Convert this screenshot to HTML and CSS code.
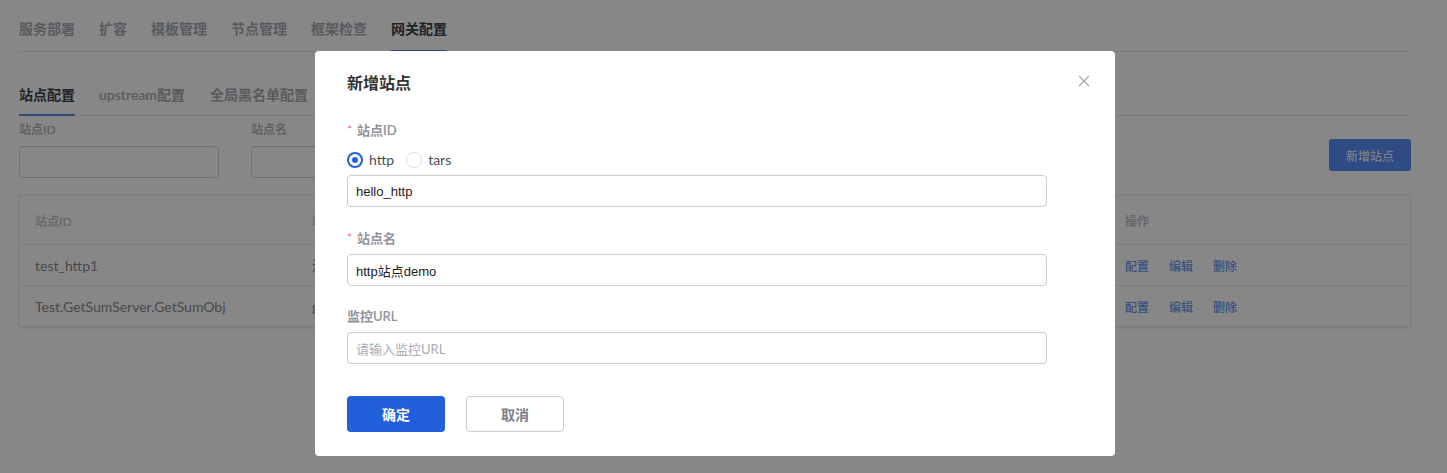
FILE: index.html
```html
<!DOCTYPE html>
<html lang="zh-CN">
<head>
<meta charset="utf-8">
<title>网关配置</title>
<link rel="stylesheet" href="styles.css">
</head>
<body>
<div class="page">
  <nav class="tabs main-tabs">
    <span class="tab">服务部署</span>
    <span class="tab">扩容</span>
    <span class="tab">模板管理</span>
    <span class="tab">节点管理</span>
    <span class="tab">框架检查</span>
    <span class="tab active">网关配置</span>
  </nav>
  <nav class="tabs sub-tabs">
    <span class="tab active">站点配置</span>
    <span class="tab">upstream配置</span>
    <span class="tab">全局黑名单配置</span>
  </nav>
  <div class="filters">
    <div class="field">
      <label class="flabel">站点ID</label>
      <div class="finput"></div>
    </div>
    <div class="field">
      <label class="flabel">站点名</label>
      <div class="finput"></div>
    </div>
    <button class="add-btn">新增站点</button>
  </div>
  <div class="table">
    <div class="row head">
      <div class="c c1">站点ID</div>
      <div class="c c2">站点名</div>
      <div class="c c3">监控URL</div>
      <div class="c c4">操作</div>
    </div>
    <div class="row">
      <div class="c c1">test_http1</div>
      <div class="c c2">测试站点</div>
      <div class="c c3"></div>
      <div class="c c4"><a class="link">配置</a><a class="link">编辑</a><a class="link">删除</a></div>
    </div>
    <div class="row">
      <div class="c c1">Test.GetSumServer.GetSumObj</div>
      <div class="c c2">getsum站点</div>
      <div class="c c3"></div>
      <div class="c c4"><a class="link">配置</a><a class="link">编辑</a><a class="link">删除</a></div>
    </div>
  </div>
</div>

<div class="mask"></div>

<div class="dialog">
  <div class="dlg-head">
    <span class="dlg-title">新增站点</span>
    <span class="dlg-close">
      <svg width="12" height="12" viewBox="0 0 12 12"><path d="M1 1L11 11M11 1L1 11" stroke="#a3a6ad" stroke-width="1.2" fill="none"/></svg>
    </span>
  </div>
  <div class="form">
    <div class="item first">
      <div class="label"><span class="star">*</span>站点ID</div>
      <div class="radios">
        <span class="radio checked"><span class="dot"></span></span><span class="rtext">http</span>
        <span class="radio"></span><span class="rtext">tars</span>
      </div>
      <div class="input">hello_http</div>
    </div>
    <div class="item">
      <div class="label"><span class="star">*</span>站点名</div>
      <div class="input">http站点demo</div>
    </div>
    <div class="item">
      <div class="label">监控URL</div>
      <div class="input placeholder">请输入监控URL</div>
    </div>
    <div class="actions">
      <button class="btn primary">确定</button>
      <button class="btn plain">取消</button>
    </div>
  </div>
</div>
</body>
</html>
```
FILE: styles.css
```css
* { box-sizing: border-box; }
html, body { margin: 0; padding: 0; background: #fff; }
body {
  font-family: "Lato", "Noto Sans CJK SC", sans-serif;
  width: 1447px;
  height: 473px;
  overflow: hidden;
}
.page { padding: 8px 36px 0 19px; }

.tabs {
  display: flex;
  gap: 24px;
  border-bottom: 1px solid #e6e6e6;
}
.tab {
  font-size: 14px;
  color: #a9abb2;
  font-weight: 600;
  border-bottom: 2px solid transparent;
  margin-bottom: -1px;
  white-space: nowrap;
}
.tab.active { color: #3e4048; font-weight: 700; border-bottom-color: #5a8ff2; }
.main-tabs .tab { line-height: 42px; }
.sub-tabs { margin-top: 24px; gap: 24px; }
.sub-tabs .tab { line-height: 38px; }
.sub-tabs .tab:last-child { margin-left: 1px; }

.filters {
  display: flex;
  gap: 32px;
  margin-top: 6px;
}
.field { display: flex; flex-direction: column; width: 200px; }
.flabel { font-size: 12px; font-weight: 600; line-height: 16px; height: 16px; color: #b4b7be; margin-bottom: 8px; }
.finput { height: 32px; border: 1px solid #d4d6dc; border-radius: 4px; background: #fff; }
.add-btn {
  margin-left: auto;
  margin-top: 17px;
  align-self: flex-start;
  width: 82px;
  height: 32px;
  border: 0;
  border-radius: 3px;
  background: #5790f8;
  color: #fff;
  font-family: inherit;
  font-size: 12px;
}

.table {
  margin-top: 17px;
  border: 1px solid #e8e8ea;
  box-shadow: 0 1px 3px rgba(0,0,0,0.08);
  background: #fff;
}
.row { display: flex; border-top: 1px solid #e8e8ea; height: 41px; align-items: center; }
.row.head { border-top: 0; height: 48px; }
.c { padding-left: 15px; font-size: 14px; color: #8a8b90; white-space: nowrap; overflow: hidden; }
.head .c { font-size: 12px; font-weight: 600; color: #c3c4c8; }
.c1 { width: 277px; }
.c2 { width: 400px; }
.c3 { width: 413px; }
.c4 { flex: 1; display: flex; gap: 20px; }
.link { font-size: 12px; font-weight: 500; color: #6d96ef; }

.mask {
  position: fixed;
  inset: 0;
  background: rgba(0,0,0,0.47);
}

.dialog {
  position: fixed;
  left: 315px;
  top: 51px;
  width: 800px;
  height: 405px;
  background: #fff;
  border-radius: 4px;
  padding: 20px 32px 24px;
}
.dlg-head { display: flex; justify-content: space-between; align-items: center; height: 24px; width: 743px; }
.dlg-title { font-size: 16px; font-weight: 700; color: #333; line-height: 24px; }
.dlg-close { display: flex; margin-top: -4px; }

.form { width: 700px; margin-top: 27px; }
.item { margin-bottom: 22px; }
.item.first { margin-bottom: 23px; }
.label {
  font-size: 13px; font-weight: 600;
  line-height: 16px; height: 16px;
  color: #8f939c; margin-bottom: 8px;
  display: flex; align-items: center;
}
.star { color: #f56c6c; margin-right: 5px; font-weight: 400; font-size: 12px; line-height: 16px; }
.radios { display: flex; align-items: center; height: 20px; margin-top: 12px; margin-bottom: 5px; }
.radio {
  width: 16px; height: 16px;
  border-radius: 50%;
  border: 1px solid #dcdfe6;
  display: flex; align-items: center; justify-content: center;
  margin-right: 6px;
}
.radio.checked { border: 2px solid #2160dc; }
.dot { width: 6px; height: 6px; border-radius: 50%; background: #2160dc; }
.rtext { font-size: 14px; line-height: 20px; color: #4a4d55; margin-right: 12px; }
.input {
  height: 32px;
  border: 1px solid #c8cbd3;
  border-radius: 4px;
  padding-left: 8px;
  display: flex; align-items: center;
  font-family: "Liberation Sans", "Noto Sans CJK SC", sans-serif;
  font-size: 13px;
  color: #1f2024;
}
.input.placeholder { color: #a8abb3; font-family: "Lato", "Noto Sans CJK SC", sans-serif; }
.actions { display: flex; gap: 21px; margin-top: 32px; }
.btn {
  width: 98px; height: 36px;
  border-radius: 4px;
  font-family: "Lato", "Noto Sans CJK SC", sans-serif;
  font-size: 14px;
}
.btn.primary { background: #215fdb; border: 0; color: #fff; font-weight: 700; }
.btn.plain { background: #fff; border: 1px solid #c9ccd4; color: #7a7e88; font-weight: 600; }
```
